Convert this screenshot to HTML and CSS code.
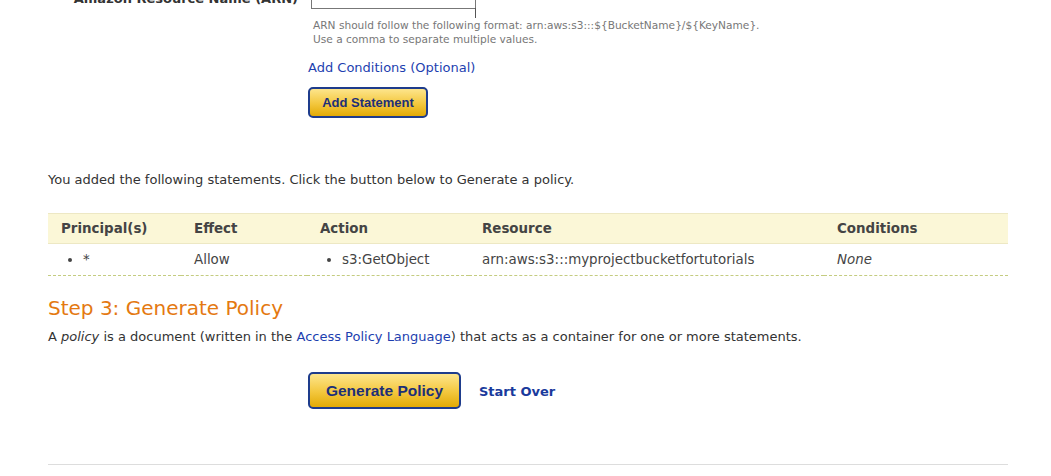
FILE: index.html
```html
<!DOCTYPE html>
<html>
<head>
<meta charset="utf-8">
<link rel="stylesheet" href="styles.css">
</head>
<body>
<div class="page">
  <div class="form-row">
    <div class="label">Amazon Resource Name (ARN)</div>
    <div class="field">
      <div class="input"></div>
      <div class="help">ARN should follow the following format: arn:aws:s3:::${BucketName}/${KeyName}.<br>Use a comma to separate multiple values.</div>
      <a class="cond-link">Add Conditions (Optional)</a>
      <div><button class="btn btn-small">Add Statement</button></div>
    </div>
  </div>

  <p class="added">You added the following statements. Click the button below to Generate a policy.</p>

  <table class="stmts">
    <thead>
      <tr>
        <th class="c1">Principal(s)</th>
        <th class="c2">Effect</th>
        <th class="c3">Action</th>
        <th class="c4">Resource</th>
        <th class="c5">Conditions</th>
      </tr>
    </thead>
    <tbody>
      <tr>
        <td><ul class="bul"><li>*</li></ul></td>
        <td>Allow</td>
        <td><ul class="bul"><li>s3:GetObject</li></ul></td>
        <td>arn:aws:s3:::myprojectbucketfortutorials</td>
        <td><em>None</em></td>
      </tr>
    </tbody>
  </table>

  <h2 class="step">Step 3: Generate Policy</h2>
  <p class="desc">A <em>policy</em> is a document (written in the <a class="lnk">Access Policy Language</a>) that acts as a container for one or more statements.</p>

  <div class="actions">
    <button class="btn btn-big">Generate Policy</button>
    <a class="start">Start Over</a>
  </div>

  <div class="rule"></div>
</div>
</body>
</html>
```
FILE: styles.css
```css
html, body {
  margin: 0;
  padding: 0;
  background: #fff;
}
body {
  font-family: "DejaVu Sans", Verdana, sans-serif;
  color: #333;
  overflow: hidden;
}
.page {
  width: 960px;
  margin-left: 48px;
}
.form-row {
  display: flex;
  margin-top: -14px;
}
.label {
  width: 250px;
  text-align: right;
  padding-right: 13px;
  padding-top: 5px;
  font-weight: bold;
  font-size: 13px;
  color: #333;
  line-height: 16px;
}
.field {
  display: flex;
  flex-direction: column;
  align-items: flex-start;
}
.input {
  position: relative;
  width: 163px;
  height: 21px;
  border: 1px solid #777;
}
.input::after {
  content: "";
  position: absolute;
  right: -1px;
  top: 100%;
  width: 1px;
  height: 10px;
  background: #555;
}
.help {
  margin-top: 9px;
  margin-left: 2px;
  font-size: 10.6px;
  line-height: 14px;
  color: #777;
}
.cond-link {
  margin-top: 14px;
  margin-left: -3px;
  font-size: 13px;
  line-height: 16px;
  color: #1d3fb0;
}
.btn {
  display: inline-block;
  border: 2px solid #1e3c8c;
  border-radius: 5px;
  background: linear-gradient(#fde58c, #f3c73d 55%, #e2aa06);
  color: #1c2f78;
  font-weight: bold;
  font-family: "Liberation Sans", Arial, sans-serif;
  padding: 0;
  cursor: pointer;
}
.btn-small {
  margin-top: 11px;
  margin-left: -3px;
  width: 120px;
  height: 31px;
  font-size: 13px;
}
.added {
  margin: 54px 0 0 0;
  font-size: 13px;
  line-height: 16px;
  color: #333;
}
.stmts {
  margin-top: 25px;
  width: 960px;
  border-collapse: collapse;
  font-size: 13.4px;
}
.stmts th {
  background: #fbf7d7;
  border-top: 1px solid #ede8c4;
  border-bottom: 1px solid #ede8c4;
  height: 29px;
  text-align: left;
  font-weight: bold;
  color: #444;
  padding: 0 0 0 13px;
}
.stmts td {
  height: 30px;
  padding: 0 0 1px 13px;
  border-bottom: 1px dashed #c4cc80;
  color: #444;
}
.c1 { width: 120px; }
.c2 { width: 113px; }
.c3 { width: 149px; }
.c4 { width: 342px; }
.bul {
  margin: 0;
  padding: 0 0 0 22px;
}
.stmts td em {
  font-style: italic;
}
.step {
  margin: 20px 0 0 0;
  font-weight: normal;
  font-size: 20px;
  line-height: 24px;
  color: #e47911;
}
.desc {
  margin: 9px 0 0 0;
  font-size: 13px;
  line-height: 16px;
  color: #333;
}
.lnk {
  color: #1d3fb0;
}
.actions {
  display: flex;
  align-items: center;
  margin-top: 27px;
  padding-left: 260px;
  gap: 18px;
}
.btn-big {
  width: 153px;
  height: 37px;
  font-size: 15.5px;
}
.start {
  font-weight: bold;
  font-size: 13px;
  color: #1a3a9c;
  padding-top: 2px;
}
.rule {
  margin-top: 55px;
  height: 1px;
  background: #ddd;
}
```
